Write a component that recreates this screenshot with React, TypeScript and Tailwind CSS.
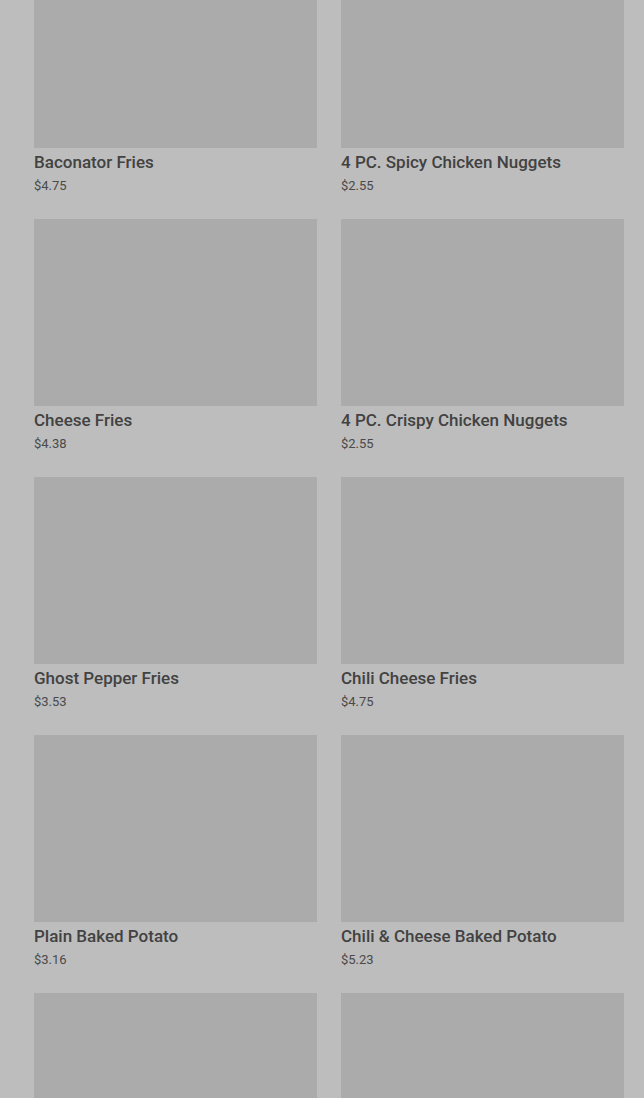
const ITEMS = [
  { name: "Baconator Fries", price: "$4.75" },
  { name: "4 PC. Spicy Chicken Nuggets", price: "$2.55" },
  { name: "Cheese Fries", price: "$4.38" },
  { name: "4 PC. Crispy Chicken Nuggets", price: "$2.55" },
  { name: "Ghost Pepper Fries", price: "$3.53" },
  { name: "Chili Cheese Fries", price: "$4.75" },
  { name: "Plain Baked Potato", price: "$3.16" },
  { name: "Chili & Cheese Baked Potato", price: "$5.23" },
  { name: "Sour Cream & Chive Baked Potato", price: "$3.81" },
  { name: "Bacon Cheese Baked Potato", price: "$5.23" },
]

export default function App() {
  return (
    <div className="h-[1098px] overflow-hidden bg-[#bdbdbd] font-['Roboto',sans-serif]">
      <div className="-mt-[39px] grid grid-cols-2 gap-x-6 gap-y-[25px] pl-[34px] pr-5">
        {ITEMS.map((item) => (
          <div key={item.name} className="flex flex-col">
            <div className="h-[187px] bg-[#ababab]" />
            <p className="mt-1 text-[17px] leading-5 font-medium text-[#424242]">{item.name}</p>
            <p className="mt-[6px] text-[13px] leading-4 text-[#4a4a4a]">{item.price}</p>
          </div>
        ))}
      </div>
    </div>
  )
}
